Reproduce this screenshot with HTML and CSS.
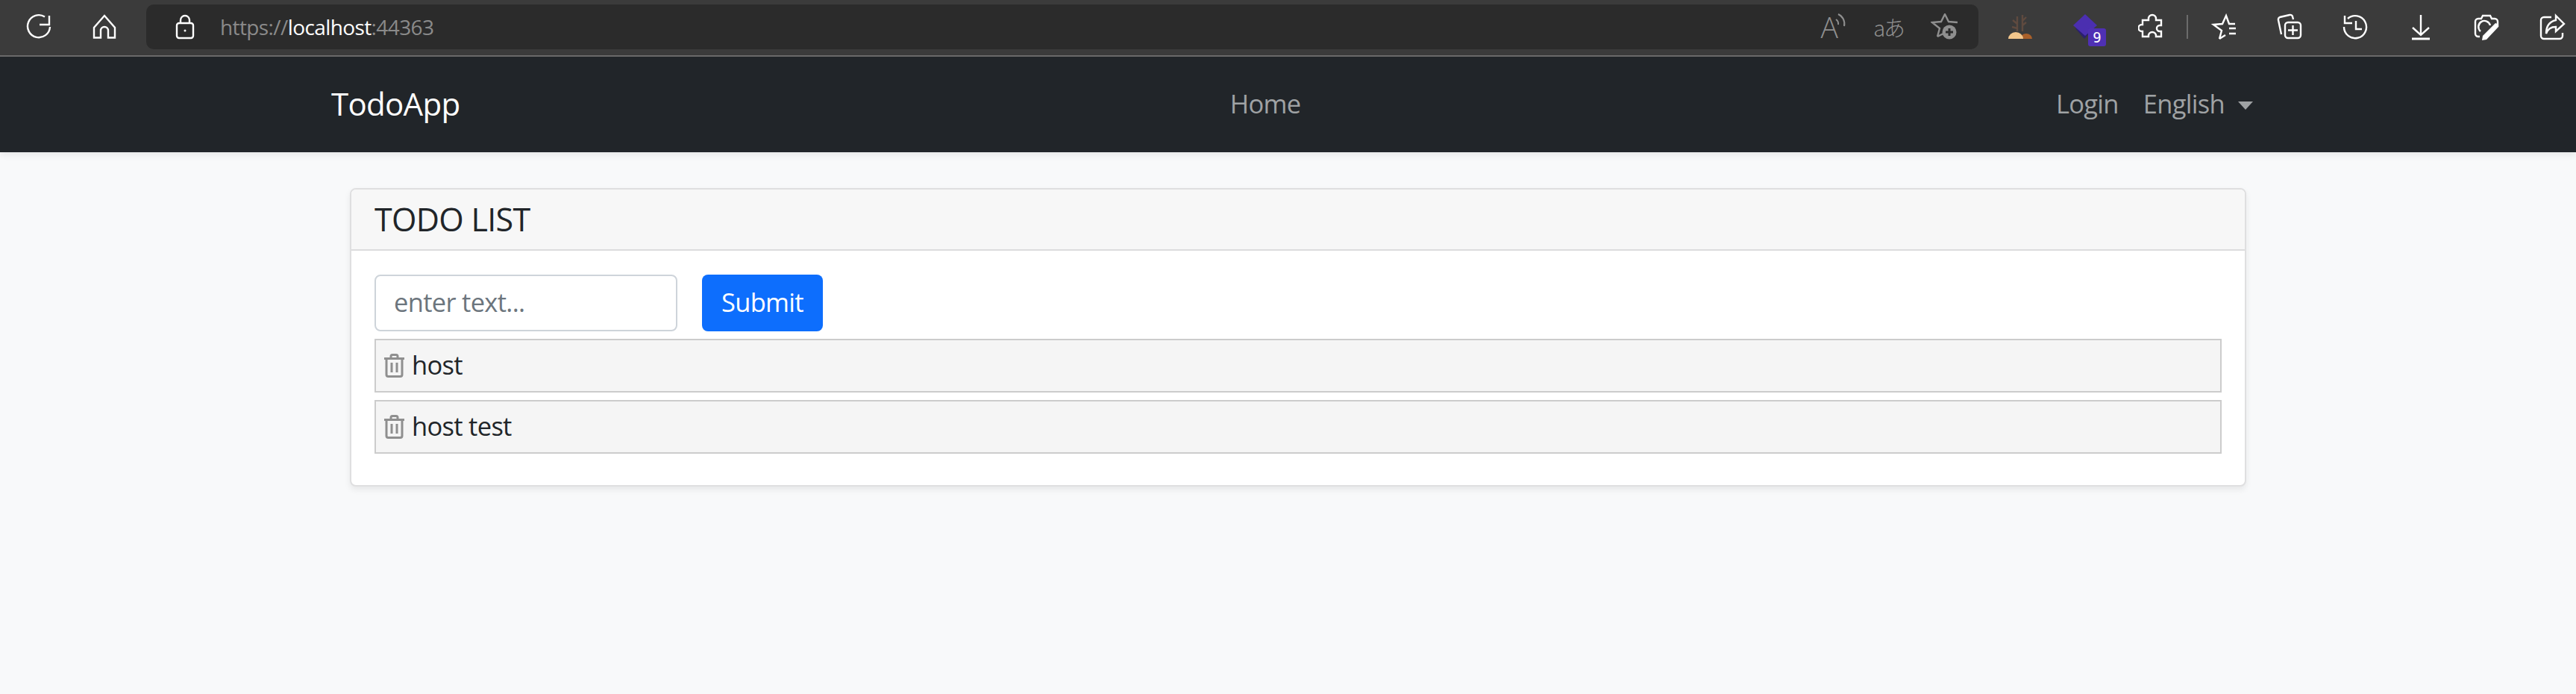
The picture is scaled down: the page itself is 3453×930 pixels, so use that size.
FILE: index.html
```html
<!DOCTYPE html>
<html lang="en">
<head>
    <meta charset="UTF-8">
    <meta name="viewport" content="width=device-width, initial-scale=1.0">
    <title>TodoApp</title>
    <link rel="stylesheet" href="styles.css">
</head>
<body>

    <div class="toolbar">
        <svg class="tool-icon" viewBox="0 0 36 36"><path d="M26 4.500A15 15 0 1 0 33 18"/><path d="M32 3v12H19"/></svg>
        <svg class="tool-icon home-icon" viewBox="0 0 36 36"><path d="M18 3L32 19v13.500h-9V23a5 5 0 0 0-10 0v9.500H4V19z"/></svg>

        <div class="urlbar">
            <svg class="lock-icon" viewBox="0 0 36 36"><rect x="7" y="13" width="22" height="20" rx="3"/><path d="M12 13V9a6 6 0 0 1 12 0v4"/><circle class="solid" cx="18" cy="23" r="1.500"/></svg>
            <div class="url"><span class="url-dim">https://</span>localhost<span class="url-dim">:44363</span></div>
            <div class="url-tools">
                <div class="read-aloud">A<svg viewBox="0 0 16 22"><path d="M2 9a7 7 0 0 1 3 7"/><path d="M5 2a14 14 0 0 1 8 16"/></svg></div>
                <div class="translate">aあ</div>
                <svg class="url-icon" viewBox="0 0 36 36"><path d="M9 31l3-11-10-8 12-1 5-10 5 10 12 1"/><path d="M9 31l8-4"/><circle class="solid" cx="25" cy="25" r="9.500"/><path class="plus" d="M25 20v10M20 25h10"/></svg>
            </div>
        </div>

        <div class="tool-group">
            <svg class="tool-icon" viewBox="0 0 36 36">
                <g class="branches"><path d="M14 24V4M14 14l-6-5M14 20l-7-2M21 24V2M21 10l5-5M21 16l5-4"/></g>
                <path class="mound-b" d="M18 34a8 7 0 0 1 16 0z"/>
                <path class="mound-a" d="M2 34a10 9 0 0 1 20 0z"/>
            </svg>
            <div class="ext-icon">
                <svg viewBox="0 0 36 36"><path class="dia-b" d="M4 19l12 14 10-12-10-12z"/><path class="dia-a" d="M17 0l16 15-16 14L1 15z"/></svg>
                <span class="ext-badge">9</span>
            </div>
            <svg class="tool-icon" viewBox="0 0 36 36"><path d="M14 7a5 5 0 0 1 10 0v2h7v7h-2a3 3 0 0 0 0 8h2v7h-7v-1a5 5 0 0 0-10 0v1H6v-7H5a4.500 4.500 0 0 1 0-9h1V9h8z"/></svg>
            <div class="tool-sep"></div>
            <svg class="tool-icon" viewBox="0 0 36 36"><path d="M12 34l3-11-11-8 12-1 5-11 4 11h8"/><path d="M12 34l8-5M25 20h9M25 27h9"/></svg>
            <svg class="tool-icon" viewBox="0 0 36 36"><path d="M7 28L3 9q-.5-3 2-4L18 2q3-.5 4 2l1 4"/><rect x="12" y="12" width="21" height="21" rx="4"/><path d="M22.500 16v13M16 22.500h13"/></svg>
            <svg class="tool-icon" viewBox="0 0 36 36"><path d="M8 7A15 15 0 1 1 3 18"/><path d="M4 3v10h10"/><path d="M19 10v11h8"/></svg>
            <svg class="tool-icon" viewBox="0 0 36 36"><path d="M18 2v26M7 19l11 10 11-10"/><path class="thick" d="M6 34h24"/></svg>
            <svg class="tool-icon" viewBox="0 0 36 36"><path d="M9 31H7a4 4 0 0 1-4-4V11a4 4 0 0 1 4-4h4l2-4h10l2 4h4a4 4 0 0 1 4 4v7"/><path d="M10 24a8 8 0 1 1 13-8"/><path class="solid" d="M13 30l17-17q5 1 4 5L18 35l-6 1z"/></svg>
            <svg class="tool-icon" viewBox="0 0 36 36"><path d="M17 5H7a4 4 0 0 0-4 4v21a4 4 0 0 0 4 4h21a4 4 0 0 0 4-4v-4"/><path d="M23 3l11 11-11 10v-6q-10 0-13 9 0-15 13-18z"/></svg>
        </div>
    </div>

    <nav class="navbar">
        <a class="brand">TodoApp</a>
        <div class="nav-center"><a class="nav-link">Home</a></div>
        <div class="nav-right">
            <a class="nav-link">Login</a>
            <a class="nav-link dropdown">English</a>
        </div>
    </nav>

    <main class="page">
        <div class="card">
            <div class="card-header">TODO LIST</div>
            <div class="card-body">
                <form class="todo-form">
                    <input type="text" class="todo-input" placeholder="enter text...">
                    <button type="button" class="btn-submit">Submit</button>
                </form>
                <div class="todo-item">
                    <svg class="trash" viewBox="0 0 27 32"><path d="M0 6.500h27M9 6V3.500Q9 1.500 11 1.500h5q2 0 2 2V6M3 7v21q0 2.500 2.500 2.500h16Q24 30.500 24 28V7M10 12v13M17 12v13"/></svg>
                    <span class="todo-text">host</span>
                </div>
                <div class="todo-item">
                    <svg class="trash" viewBox="0 0 27 32"><path d="M0 6.500h27M9 6V3.500Q9 1.500 11 1.500h5q2 0 2 2V6M3 7v21q0 2.500 2.500 2.500h16Q24 30.500 24 28V7M10 12v13M17 12v13"/></svg>
                    <span class="todo-text">host test</span>
                </div>
            </div>
        </div>
    </main>

</body>
</html>
```

FILE: styles.css
```css
* {
    box-sizing: border-box;
}
body {
    margin: 0;
    min-height: 930px;
    overflow: hidden;
    font-family: "Open Sans", "Noto Sans", sans-serif;
    font-size: 34.5px;
    letter-spacing: -0.7px;
    color: #212529;
    background-color: #f8f9fa;
}

/* browser chrome */
.toolbar {
    display: flex;
    align-items: center;
    height: 76px;
    padding: 0 14px 2px 34px;
    background: #3b3b3b;
    border-bottom: 2px solid #6b6b6b;
}
.toolbar svg {
    fill: none;
    stroke: #fff;
    stroke-width: 2.4;
}
.tool-icon {
    flex: none;
    width: 36px;
    height: 36px;
}
.home-icon {
    margin-left: 52px;
}
.toolbar svg .solid {
    fill: currentColor;
    stroke: none;
}
.toolbar svg .thick {
    stroke-width: 3;
}
.urlbar {
    flex: 1;
    display: flex;
    align-items: center;
    height: 60px;
    margin-left: 38px;
    padding: 0 28px 0 34px;
    background: #2b2b2b;
    border-radius: 10px;
}
.lock-icon {
    flex: none;
    width: 36px;
    height: 36px;
    color: #fff;
}
.url {
    flex: 1;
    margin-left: 29px;
    font-size: 28px;
    letter-spacing: -0.6px;
    color: #fff;
}
.url-dim {
    color: #8a8a8a;
}
.url-tools {
    display: flex;
    align-items: center;
    gap: 36px;
    color: #8f8f8f;
}
.read-aloud {
    display: flex;
    align-items: flex-start;
    font-size: 39px;
    font-weight: 300;
    line-height: 38px;
}
.toolbar .read-aloud svg {
    width: 16px;
    height: 22px;
    margin-left: -4px;
    stroke: #8f8f8f;
    stroke-width: 2;
}
.translate {
    font-family: "Noto Sans CJK JP", "Noto Sans", sans-serif;
    font-size: 29px;
    font-weight: 300;
    letter-spacing: -2px;
}
.toolbar .url-icon {
    width: 36px;
    height: 36px;
    color: #8f8f8f;
    stroke: #8f8f8f;
}
.toolbar svg .plus {
    stroke: #2b2b2b;
    stroke-width: 3;
}
.tool-group {
    flex: none;
    display: flex;
    align-items: center;
    gap: 52px;
    margin-left: 38px;
    color: #fff;
}
.toolbar svg .branches {
    stroke: #5f4a3f;
}
.toolbar svg .mound-a {
    fill: #f3c68c;
    stroke: none;
}
.toolbar svg .mound-b {
    fill: #a9602a;
    stroke: none;
}
.ext-icon {
    position: relative;
    width: 36px;
    height: 36px;
}
.toolbar .ext-icon svg {
    width: 36px;
    height: 36px;
    stroke: none;
}
.toolbar svg .dia-a {
    fill: #4b2fb0;
}
.toolbar svg .dia-b {
    fill: #2a1f70;
}
.ext-badge {
    position: absolute;
    left: 21px;
    top: 20px;
    width: 24px;
    height: 24px;
    border-radius: 3px;
    background: #4f30b4;
    color: #fff;
    font-family: "DejaVu Sans Mono", monospace;
    font-size: 19px;
    letter-spacing: 0;
    line-height: 24px;
    text-align: center;
}
.tool-sep {
    flex: none;
    width: 2px;
    height: 32px;
    margin: 0 -22px 0 -23px;
    background: #6b6b6b;
}

/* navbar */
.navbar {
    display: flex;
    align-items: center;
    height: 128px;
    padding: 0 433px 4px 444px;
    background: #212529;
    box-shadow: 0 4px 9px rgba(0, 0, 0, 0.075);
}
.brand {
    font-size: 42px;
    color: #fff;
}
.nav-center {
    flex: 1;
    display: flex;
    justify-content: center;
    padding-left: 20px;
}
.nav-right {
    display: flex;
    align-items: center;
    gap: 33px;
}
.nav-link {
    color: #9fa2a4;
}
.dropdown::after {
    content: "";
    display: inline-block;
    margin-left: 18px;
    vertical-align: 5px;
    border-top: 11px solid #9fa2a4;
    border-left: 10px solid transparent;
    border-right: 10px solid transparent;
}

/* todo card */
.page {
    width: 2542px;
    margin: 48px 0 0 469px;
}
.card {
    background: #fff;
    border: 2px solid #dfdfe0;
    border-radius: 8px;
    box-shadow: 0 4px 9px rgba(0, 0, 0, 0.075);
}
.card-header {
    display: flex;
    align-items: center;
    height: 82px;
    padding: 0 31px 2px;
    font-size: 43px;
    background: #f7f7f7;
    border-bottom: 2px solid #dcdcdd;
    border-radius: 6px 6px 0 0;
}
.card-body {
    padding: 32px 31px;
}
.todo-form {
    display: flex;
    gap: 33px;
}
.todo-input {
    width: 406px;
    height: 76px;
    padding: 0 24px 3px;
    font: inherit;
    letter-spacing: inherit;
    color: #212529;
    background: #fff;
    border: 2px solid #ced4da;
    border-radius: 8px;
}
.todo-input::placeholder {
    color: #6c757d;
}
.btn-submit {
    height: 76px;
    padding: 0 26px 3px;
    font: inherit;
    letter-spacing: inherit;
    color: #fff;
    background: #0d6efd;
    border: none;
    border-radius: 8px;
}
.todo-item {
    display: flex;
    align-items: center;
    gap: 10px;
    height: 72px;
    margin-top: 10px;
    padding-left: 11px;
    background: #f5f5f5;
    border: 2px solid #ccc;
}
.todo-item:last-child {
    margin-bottom: 10px;
}
.todo-text {
    margin-bottom: 3px;
}
.trash {
    flex: none;
    width: 27px;
    height: 32px;
    fill: none;
    stroke: #8f8f8f;
    stroke-width: 3;
}
```
